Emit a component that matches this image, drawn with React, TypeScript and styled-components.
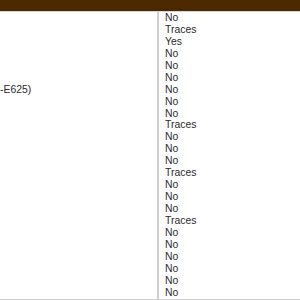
import React from 'react'
import styled, { createGlobalStyle } from 'styled-components'

const GlobalStyle = createGlobalStyle`
    html, body {
        margin: 0;
        padding: 0;
        background: #fff;
        overflow: hidden;
    }
    body {
        font-family: "Liberation Sans", Arial, sans-serif;
    }
`

const Page = styled.div`
    width: 300px;
    height: 300px;
    overflow: hidden;
`

const HeaderBar = styled.div`
    height: 11px;
    background-color: #4b2800;
    border-bottom: 1px solid #d6d6d6;
`

const Row = styled.div`
    display: grid;
    grid-template-columns: 157px 1fr;
    border-bottom: 2px solid #d0d0d0;
`

const Cell = styled.div<{ $divider?: boolean }>`
    font-size: 10.4px;
    line-height: 11.95px;
    color: #2b2b2b;
    padding: 0 0 0 ${p => (p.$divider ? '6px' : '0')};
    border-left: ${p => (p.$divider ? '2px solid #cfcfcf' : 'none')};
    white-space: nowrap;
    overflow: hidden;
`

const Line = styled.div`
    height: 11.95px;
`

const values = [
    'No', 'Traces', 'Yes', 'No', 'No', 'No', 'No', 'No', 'No', 'Traces',
    'No', 'No', 'No', 'Traces', 'No', 'No', 'No', 'Traces', 'No', 'No',
    'No', 'No', 'No', 'No',
]

const App = () => {
    return (
        <Page>
            <GlobalStyle />
            <HeaderBar />
            <Row>
                <Cell>
                    {values.map((_, i) => (
                        <Line key={i}>{i === 6 ? '-E625)' : ''}</Line>
                    ))}
                </Cell>
                <Cell $divider>
                    {values.map((v, i) => (
                        <Line key={i}>{v}</Line>
                    ))}
                </Cell>
            </Row>
        </Page>
    )
}

export default App
